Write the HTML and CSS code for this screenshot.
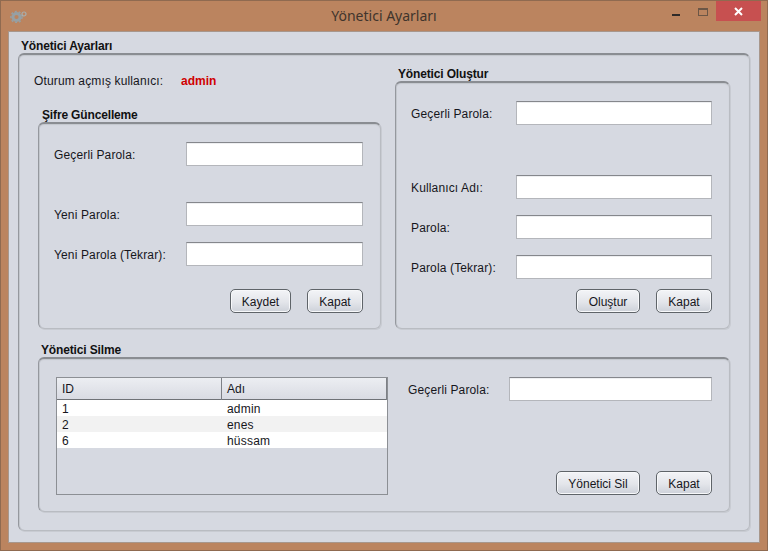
FILE: index.html
```html
<!DOCTYPE html>
<html lang="tr">
<head>
  <meta charset="UTF-8" />
  <title>Yönetici Ayarları</title>
  <link rel="stylesheet" href="styles.css">
</head>
<body>
  <div class="window">
    <div class="titlebar">
      <svg class="app-icon" width="18" height="14" viewBox="0 0 18 14">
        <circle cx="6.5" cy="8" r="3.6" fill="none" stroke="#96a0a4" stroke-width="3"/>
        <circle cx="6.5" cy="8" r="5.6" fill="none" stroke="#96a0a4" stroke-width="1.4" stroke-dasharray="2 2"/>
        <circle cx="14" cy="5" r="2" fill="none" stroke="#a8aeae" stroke-width="1.2"/>
      </svg>
      <div class="title">Yönetici Ayarları</div>
      <div class="win-btns">
        <span class="win-min"></span>
        <span class="win-max"></span>
        <span class="win-close">
          <svg width="9" height="9" viewBox="0 0 9 9"><path d="M1 1 L8 8 M8 1 L1 8" stroke="#fff" stroke-width="2"/></svg>
        </span>
      </div>
    </div>

    <div class="client">
      <div class="group-title main-title">Yönetici Ayarları</div>
      <div class="box outer">
        <div class="top-row">
          <div class="left-col">
            <div class="session">
              <span class="session-label">Oturum açmış kullanıcı:</span>
              <span class="session-user">admin</span>
            </div>
            <div class="group-title sub-title">Şifre Güncelleme</div>
            <div class="box pw-box">
              <div class="field first"><label>Geçerli Parola:</label><input type="text"></div>
              <div class="field gap-big"><label>Yeni Parola:</label><input type="text"></div>
              <div class="field"><label>Yeni Parola (Tekrar):</label><input type="text"></div>
              <div class="actions">
                <button class="btn btn-save">Kaydet</button>
                <button class="btn btn-close">Kapat</button>
              </div>
            </div>
          </div>

          <div class="right-col">
            <div class="group-title sub-title">Yönetici Oluştur</div>
            <div class="box create-box">
              <div class="field first"><label>Geçerli Parola:</label><input type="text"></div>
              <div class="field gap-huge"><label>Kullanıcı Adı:</label><input type="text"></div>
              <div class="field"><label>Parola:</label><input type="text"></div>
              <div class="field"><label>Parola (Tekrar):</label><input type="text"></div>
              <div class="actions">
                <button class="btn btn-create">Oluştur</button>
                <button class="btn btn-close">Kapat</button>
              </div>
            </div>
          </div>
        </div>

        <div class="group-title sub-title delete-title">Yönetici Silme</div>
        <div class="box delete-box">
          <div class="table">
            <div class="thead">
              <div class="th th-id">ID</div>
              <div class="th">Adı</div>
            </div>
            <div class="tr"><div class="td-id">1</div><div>admin</div></div>
            <div class="tr alt"><div class="td-id">2</div><div>enes</div></div>
            <div class="tr"><div class="td-id">6</div><div>hüssam</div></div>
          </div>
          <div class="delete-side">
            <div class="field"><label>Geçerli Parola:</label><input type="text"></div>
            <div class="actions">
              <button class="btn btn-delete">Yönetici Sil</button>
              <button class="btn btn-close">Kapat</button>
            </div>
          </div>
        </div>
      </div>
    </div>
  </div>
</body>
</html>
```

FILE: styles.css
```css
* {
  box-sizing: border-box;
}

html, body {
  height: 100%;
  margin: 0;
  overflow: hidden;
}

body {
  font-family: "Liberation Sans", Arial, sans-serif;
  font-size: 12px;
  color: #16161c;
}

.window {
  width: 768px;
  height: 551px;
  display: flex;
  flex-direction: column;
  background: #bb845f;
  border: 1px solid #8f6a50;
  padding: 0 7px 7px;
}

.titlebar {
  height: 30px;
  display: flex;
  align-items: center;
  position: relative;
  flex-shrink: 0;
}

.app-icon {
  margin: 0 0 1px 2px;
}

.title {
  position: absolute;
  left: 0;
  right: 0;
  top: 5px;
  text-align: center;
  font-family: "Noto Sans", sans-serif;
  font-size: 14px;
  line-height: 20px;
  color: #40342c;
}

.win-btns {
  position: absolute;
  right: -1px;
  top: 0;
  display: flex;
  align-items: flex-start;
}

.win-min {
  width: 8px;
  height: 2px;
  margin: 13px 0 0;
  background: #2f2a28;
}

.win-max {
  width: 10px;
  height: 8px;
  margin: 7px 8px 0 18px;
  border: 1px solid #6c5646;
  border-top-width: 2px;
}

.win-close {
  width: 45px;
  height: 20px;
  background: #c75050;
  display: flex;
  align-items: center;
  justify-content: center;
}

.client {
  flex: 1;
  background: #d6d9e1;
  border: 1px solid #a8978c;
  padding: 7px 9px 0;
}

.group-title {
  font-weight: bold;
  line-height: 14px;
  letter-spacing: -0.15px;
  color: #111;
}

.main-title {
  margin-left: 3px;
}

.box {
  border: 1px solid #b9bcc2;
  border-top: 2px solid #8a8d92;
  border-left-color: #95989e;
  border-radius: 6px;
  box-shadow: inset 0 1px 1px #c4c7ce, inset 1px 0 0 #c4c7ce, 1px 1px 0 #c8cbd2;
}

.outer {
  height: 478px;
  padding: 0 19px;
}

.top-row {
  display: grid;
  grid-template-columns: 343px 335px;
  column-gap: 14px;
}

.field label,
.session-label {
  letter-spacing: 0.14px;
}

.session {
  display: flex;
  margin-top: 19px;
  margin-left: -4px;
  line-height: 14px;
}

.session-label {
  width: 147px;
}

.session-user {
  font-weight: bold;
  color: #d00000;
}

.sub-title {
  margin-left: 4px;
}

.left-col .sub-title {
  margin-top: 20px;
}

.right-col .sub-title {
  margin-top: 12px;
  margin-left: 3px;
}

.pw-box {
  height: 207px;
  padding: 0 17px 0 15px;
  display: flex;
  flex-direction: column;
}

.create-box {
  height: 248px;
  padding: 0 17px 0 15px;
  display: flex;
  flex-direction: column;
}

.field {
  display: flex;
  align-items: center;
  margin-top: 16px;
}

.field label {
  flex: 1;
  padding-top: 2px;
}

.field input {
  height: 24px;
  padding: 0 4px;
  border: 1px solid #b4b6bb;
  border-top: 1px solid #85878c;
  background: #fff;
  box-shadow: inset 0 1px 0 #eeeff1;
  outline: none;
}

.pw-box .field input {
  width: 177px;
}

.create-box .field input {
  width: 196px;
}

.pw-box .first {
  margin-top: 18px;
}

.pw-box .gap-big {
  margin-top: 36px;
}

.create-box .first {
  margin-top: 18px;
}

.create-box .gap-huge {
  margin-top: 50px;
}

.actions {
  display: flex;
  justify-content: flex-end;
  gap: 16px;
  margin-top: auto;
  margin-bottom: 15px;
}

.btn {
  height: 24px;
  padding: 1px 0 0;
  font: inherit;
  color: #16161c;
  border: 1px solid #5f6469;
  border-radius: 5px;
  background: linear-gradient(#f3f4f7, #e3e5ea 55%, #cdd1d9);
  box-shadow: inset 0 0 0 1px #f7f8fa;
}

.btn-close {
  width: 56px;
}

.btn-save {
  width: 61px;
}

.btn-create {
  width: 64px;
}

.btn-delete {
  width: 84px;
}

.delete-title {
  margin-top: 14px;
  margin-left: 3px;
}

.delete-box {
  height: 155px;
  padding: 18px 17px 0;
  display: flex;
}

.table {
  width: 332px;
  height: 118px;
  border: 1px solid #8c8f94;
  flex-shrink: 0;
}

.thead {
  display: grid;
  grid-template-columns: 165px 1fr;
  height: 22px;
  background: linear-gradient(#eceef2, #d9dbe3);
  border-bottom: 1px solid #6f7277;
}

.th {
  padding-left: 5px;
  line-height: 22px;
  border-right: 1px solid #7d8086;
}

.tr {
  display: grid;
  grid-template-columns: 165px 1fr;
  height: 16px;
  line-height: 18px;
  background: #fff;
}

.tr.alt {
  background: #f2f2f2;
}

.td-id {
  padding-left: 5px;
}

.tr div:last-child {
  padding-left: 5px;
  letter-spacing: 0.2px;
}

.delete-side {
  flex: 1;
  margin-left: 20px;
  display: flex;
  flex-direction: column;
}

.delete-side .field {
  margin-top: 0;
}

.delete-side .field input {
  width: 203px;
}

.delete-side .actions {
  margin-bottom: 16px;
}
```
